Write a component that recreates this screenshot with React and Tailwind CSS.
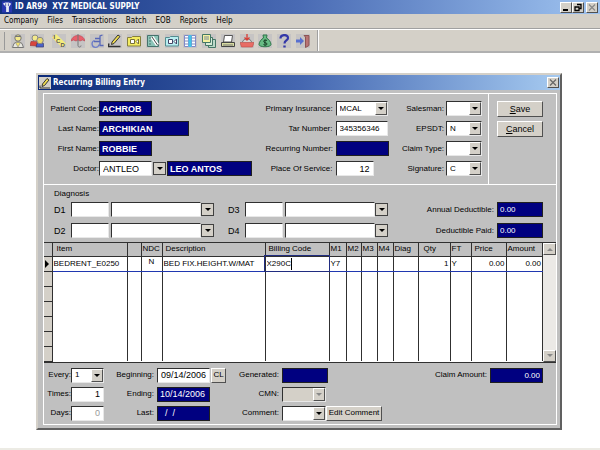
import React from 'react';

const menus = ['Company', 'Files', 'Transactions', 'Batch', 'EOB', 'Reports', 'Help'];

const patientIcons = [
  {
    name: 'Doctor',
    art: (
      <>
        <path d="M1.500 13.500 3 9.500l2.500-1.500h3l2.500 1.500 1.500 4z" fill="#e8e8e0" stroke="#777" />
        <circle cx="7" cy="4" r="3.200" fill="#f3e98c" stroke="#777" />
        <path d="M4.500 8.500 7 13l2.500-4.500z" fill="#f3e36a" stroke="#888" strokeWidth=".6" />
        <path d="M4 2.500h6" stroke="#777" />
      </>
    ),
  },
  {
    name: 'Patients',
    art: (
      <>
        <path d="M0 11.500 1 7.500h6v4.500z" fill="#d8443c" stroke="#933" strokeWidth=".6" />
        <path d="M6 13 7 9.500h6.500v3.500z" fill="#4a62c8" stroke="#336" strokeWidth=".6" />
        <circle cx="5" cy="4" r="3" fill="#f3e98c" stroke="#888" />
        <circle cx="10" cy="6.500" r="3.200" fill="#eadb6c" stroke="#888" />
      </>
    ),
  },
];

const toolIcons = [
  {
    name: 'ICD codes',
    art: (
      <>
        <path d="M0 3.500 4 0l10 9.500-4 4z" fill="#f6ec7c" />
        <g fontSize="6" fontWeight="bold" fill="#555">
          <text x="1.500" y="5">I</text>
          <text x="4" y="9">C</text>
          <text x="8.500" y="13">D</text>
        </g>
      </>
    ),
  },
  {
    name: 'Insurance',
    art: (
      <>
        <path d="M0 7C1 3 4 1.500 7 1.500S13 3 14 7l-2.500-1L9 7 7 6 5 7 2.500 6z" fill="#e8606c" stroke="#b84450" strokeWidth=".6" />
        <path d="M7 0v11.500c0 2 3 2 3 0" fill="none" stroke="#777" />
      </>
    ),
  },
  {
    name: 'Equipment',
    art: (
      <>
        <path d="M4.500 6.500a3.500 3.500 0 1 0 4.500 4" fill="none" stroke="#6c7cc8" strokeWidth="1.300" />
        <path d="M12.500 1 10 2v5.500H4M5 4.500h5M10 7.500v4h3.500" fill="none" stroke="#5868b8" strokeWidth="1.300" />
      </>
    ),
  },
  {
    name: 'Billing entry',
    art: (
      <>
        <path d="M4 8 10 1l2 1.500L6 9.500 3.500 10.500z" fill="#f0dc50" stroke="#333" />
        <path d="M1 9.500 0 12.500h12.500" fill="none" stroke="#333" strokeWidth="1.500" />
      </>
    ),
  },
  {
    name: 'Cards',
    art: (
      <>
        <path d="M.5 3.500h4l1-1h8v9.500H.5z" fill="#f4ec60" stroke="#87803c" />
        <path d="M3.500 5.500h4v4h-4zM11.500 5 9 7.500l2.500 2.500z" fill="#fff" stroke="#776f38" />
      </>
    ),
  },
  {
    name: 'Edit record',
    art: (
      <>
        <path d="M1.500 1.500h11v11h-11z" fill="#8cc4b8" stroke="#47736c" />
        <path d="M3 4h2M3 7h2M3 10h2" stroke="#47736c" />
        <path d="m6 3 5.500 8" stroke="#fff" strokeWidth="3.500" />
        <path d="m6 3 5.500 8" stroke="#444" />
      </>
    ),
  },
  {
    name: 'Payments',
    art: (
      <>
        <path d="M.5 3.500h4l1-1h8v9.500H.5z" fill="#b8eef0" stroke="#548c90" />
        <path d="M3.500 5.500h4v4h-4zM11.500 5 9 7.500l2.500 2.500z" fill="#fff" stroke="#446" />
      </>
    ),
  },
  {
    name: 'Ledger',
    art: (
      <>
        <path d="M1.500 1.500h4v11h-4zM8.500 1.500h4v11h-4z" fill="#fff" stroke="#8088c8" />
        <path d="M5.500 1h3v12h-3z" fill="#42c4e8" />
        <path d="M2 4h3M2 7h3M2 10h3M9 4h3M9 7h3M9 10h3" stroke="#7c88c0" />
      </>
    ),
  },
  {
    name: 'Copies',
    art: (
      <>
        <path d="M6.500 5.500h7v8h-7z" fill="#bcd8c8" stroke="#476" />
        <path d="M3.500 3.500h7v8h-7z" fill="#d8ecd8" stroke="#476" />
        <path d="M.5.5h8v8h-8z" fill="#f4f0a0" stroke="#476" />
        <path d="M2 3h5M2 5h5" stroke="#789" />
      </>
    ),
  },
  {
    name: 'Print',
    art: (
      <>
        <path d="M3.500 1.500h8L10.500 8h-8z" fill="#fff" stroke="#555" />
        <path d="M.5 8.500h13v4H.5z" fill="#d8dca0" stroke="#444" />
        <path d="M2 11h10" stroke="#777" />
      </>
    ),
  },
  {
    name: 'Deposit',
    art: (
      <>
        <path d="M2.500 8C3 4 11 4 11.500 8" fill="#d8d4d0" stroke="#777" />
        <path d="M0 8.500h14L12.500 13h-11z" fill="#e86c64" stroke="#b84c44" strokeWidth=".6" />
        <path d="M7 0v6M4.500 3.500 7 6l2.500-2.500" fill="none" stroke="#d83c34" strokeWidth="1.300" />
      </>
    ),
  },
  {
    name: 'Money',
    art: (
      <>
        <path d="M5 1h4L8.500 4c2 1 4.500 4 4.500 6.500 0 3-12 3-12 0C1 8 3.500 5 5.500 4z" fill="#68bc84" stroke="#2f7548" />
        <path d="M9 6.500C7 5.500 5 6.500 6 8s3 .5 3 2-2.500 1.500-3.500.5M7 5.500v6" fill="none" stroke="#163d24" />
      </>
    ),
  },
  {
    name: 'Help',
    art: (
      <>
        <path d="M3.500 4.500C3.500 0 11 0 11 4c0 2.500-3.500 2.500-3.500 5.500" fill="none" stroke="#3438a8" strokeWidth="2.200" />
        <path d="M6.300 11.500h2.400v2H6.300z" fill="#3438a8" />
      </>
    ),
  },
  {
    name: 'Exit',
    art: (
      <>
        <path d="M8 1.500h5v10L9.500 13.500V3z" fill="#b87474" stroke="#8c5454" />
        <path d="M0 5.500h4V3l4 4-4 4V8.500H0z" fill="#5870d0" />
      </>
    ),
  },
];

const columns = [
  { title: '', width: 'w-[8px]' },
  { title: 'Item', width: 'w-[75px]', head: 'pl-1', value: 'BEDRENT_E0250' },
  { title: '', width: 'w-[14px]' },
  { title: 'NDC', width: 'w-[21px]', value: 'N', cell: 'text-center align-top leading-[10px]' },
  { title: 'Description', width: 'w-[103px]', head: 'pl-[3px]', value: 'BED FIX.HEIGHT.W/MAT' },
  { title: 'Billing Code', width: 'w-[64px]', head: 'pl-[3px]', value: 'X290C', edit: true },
  { title: 'M1', width: 'w-[17px]', value: 'Y7' },
  { title: 'M2', width: 'w-[15px]' },
  { title: 'M3', width: 'w-[16px]' },
  { title: 'M4', width: 'w-[16px]' },
  { title: 'Diag', width: 'w-[25px]' },
  { title: 'Qty', width: 'w-[32px]', head: 'pl-[5px]', value: '1', cell: 'text-right' },
  { title: 'FT', width: 'w-[21px]', value: 'Y' },
  { title: 'Price', width: 'w-[35px]', head: 'pl-[3px]', value: '0.00', cell: 'text-right' },
  { title: 'Amount', width: 'w-auto', value: '0.00', cell: 'text-right' },
];

const sunken = 'border border-t-[#303030] border-l-[#303030] border-r-[#e8e8e8] border-b-[#e8e8e8]';
const raised = 'border border-t-white border-l-white border-r-[#505050] border-b-[#505050] bg-[#d4d0c8]';

const Icon = ({ icon }) => (
  <button type="button" aria-label={icon.name} className="h-[14px] w-[14px] bg-[#c6c4c4]">
    <svg viewBox="0 0 14 14" className="h-[14px] w-[14px]">{icon.art}</svg>
  </button>
);

const Arrow = ({ muted }) => (
  <svg viewBox="0 0 6 3" className="h-[3px] w-[6px]">
    <path d="M0 0h6L3 3z" fill={muted ? '#888' : '#000'} />
  </svg>
);

const Field = ({ id, label, labelWidth, children }) => (
  <div className="flex h-[15px] items-center">
    <label htmlFor={id} className={`${labelWidth} shrink-0 text-right whitespace-nowrap`}>{label}</label>
    {children}
  </div>
);

const TextBox = ({ id, value = '', width, className = '', label }) => (
  <input id={id} aria-label={label} defaultValue={value} className={`${width} ${sunken} h-[15px] bg-white px-[3px] outline-none ${className}`} />
);

const NavyBox = ({ id, value = '', width, className = '', label }) => (
  <input id={id} aria-label={label} readOnly value={value} className={`${width} h-[15px] border border-[#202020] bg-[#000080] px-[2px] text-white outline-none ${className}`} />
);

const Combo = ({ id, value = '', width, disabled = false }) => (
  <div className={`${width} ${sunken} flex h-[15px] ${disabled ? 'bg-[#d4d0c8]' : 'bg-white'}`}>
    <select id={id} disabled={disabled} defaultValue={value} className="min-w-0 flex-1 appearance-none pl-[3px] outline-none">
      <option>{value}</option>
    </select>
    <span className={`${raised} flex w-3 items-center justify-center`}><Arrow muted={disabled} /></span>
  </div>
);

const Diagnosis = ({ name }) => (
  <div className="flex h-[15px] items-center">
    <label htmlFor={name} className="w-[17px] text-[9px]">{name}</label>
    <TextBox id={name} width="w-[38px]" />
    <TextBox label={`${name} description`} width="w-[90px]" className="ml-[2px]" />
    <button type="button" aria-label={`Choose ${name}`} className="flex h-[13px] w-[13px] items-center justify-center border border-[#404040] bg-[#d4d0c8]">
      <Arrow />
    </button>
  </div>
);

const Caption = () => (
  <header className="flex h-[14px] items-center bg-linear-to-r from-[#123180] via-[#4a6bb4] to-[#a0c4f0] pr-[2px] pl-[2px] text-white">
    <svg viewBox="0 0 12 12" className="h-3 w-[11px]">
      <path d="M0 0h11v12H0z" fill="#2838b0" />
      <path d="M1 2.500C3 .5 8 .5 10 2.500L7.500 6v5.500h-3V6z" fill="#e8ecf4" />
      <path d="M4 2v3M7 2v3" stroke="#5060a8" />
    </svg>
    <h1 className="flex-1 pl-[2px] text-[8px] font-bold whitespace-pre font-['DejaVu_Sans_Condensed',sans-serif]">ID AR99  XYZ MEDICAL SUPPLY</h1>
    <button type="button" aria-label="Minimize" className={`${raised} h-[11px] w-3`}>
      <svg viewBox="0 0 10 9"><path d="M2 7h5" stroke="#000" strokeWidth="2" /></svg>
    </button>
    <button type="button" aria-label="Restore" className={`${raised} h-[11px] w-3`}>
      <svg viewBox="0 0 10 9">
        <path d="M4 1.500h4v4H6M2 4h4v3.500H2z" fill="none" stroke="#000" strokeWidth="1.300" />
      </svg>
    </button>
    <button type="button" aria-label="Close" className={`${raised} ml-[2px] h-[11px] w-3`}>
      <svg viewBox="0 0 10 9"><path d="m2 1.500 6 6m0-6-6 6" stroke="#888" strokeWidth="1.200" /></svg>
    </button>
  </header>
);

const ItemsGrid = () => (
  <div className="flex border-t border-[#303030]">
    <table className="min-w-0 flex-1 table-fixed border-collapse bg-white">
      <thead>
        <tr className="h-[13px] bg-[#c0c0c0]">
          {columns.map((col, i) => (
            <th key={i} className={`${col.width} ${col.head || 'pl-px'} overflow-hidden border-r border-b border-[#303030] p-0 text-left font-normal leading-[10px] whitespace-nowrap`}>
              {col.title}
            </th>
          ))}
        </tr>
      </thead>
      <tbody>
        <tr className="h-[15px]">
          {columns.map((col, i) => (
            <td
              key={i}
              className={`border-r border-b p-0 px-px whitespace-nowrap ${i === 0 ? 'border-[#303030] bg-[#d4d0c8]' : 'border-r-[#303030] border-b-[#2038b0]'} ${col.edit ? 'outline outline-[#202c80]' : ''} ${col.cell || ''}`}
            >
              {i === 0 && <svg viewBox="0 0 4 8" className="h-2 w-1"><path d="M0 0v8l4-4z" /></svg>}
              {col.edit ? (
                <span className="flex items-center">
                  <input aria-label={col.title} defaultValue={col.value} size="1" className="w-[25px] border-r border-black outline-none" />
                </span>
              ) : col.value}
            </td>
          ))}
        </tr>
        {[1, 2, 3, 4, 5, 6].map((row) => (
          <tr key={row} className="h-[15px]">
            {columns.map((col, i) => (
              <td key={i} className={`border-r border-[#303030] p-0 ${i === 0 ? 'border-b bg-[#d4d0c8]' : ''}`}></td>
            ))}
          </tr>
        ))}
      </tbody>
    </table>
    <div className="flex w-[13px] flex-col justify-between bg-[#ebe9e6]">
      <button type="button" aria-label="Scroll up" className={`${raised} flex h-3 items-center justify-center`}>
        <span className="rotate-180"><Arrow muted /></span>
      </button>
      <button type="button" aria-label="Scroll down" className={`${raised} flex h-3 items-center justify-center`}><Arrow muted /></button>
    </div>
  </div>
);

const BillingWindow = () => (
  <section className="mt-5 mr-[38px] ml-9 border-2 border-t-[#d4d0c8] border-l-[#d4d0c8] border-r-[#606060] border-b-[#606060] bg-[#c0c0c0]">
    <div className="flex h-[15px] items-center bg-linear-to-r from-[#0c2a78] via-[#4466b0] to-[#a6caf0] pr-px pl-px text-white">
      <svg viewBox="0 0 12 12" className="h-3 w-3">
        <path d="M0 0h12v12H0z" fill="#d4d0c8" />
        <path d="M3.500 7 8 1.500l2 1.500-4.500 5.500L3 9.500z" fill="#f0dc50" stroke="#333" />
        <path d="M1 8.500v2.500h10" fill="none" stroke="#333" />
      </svg>
      <h2 className="flex-1 pl-[2px] text-[8px] font-bold font-['DejaVu_Sans_Condensed',sans-serif]">Recurring Billing Entry</h2>
      <button type="button" aria-label="Close window" className={`${raised} h-[11px] w-3`}>
        <svg viewBox="0 0 10 9"><path d="m2 1.500 6 6m0-6-6 6" stroke="#666" strokeWidth="1.200" /></svg>
      </button>
    </div>

    <div className="mt-[3px] mr-[3px] mb-[3px] ml-[5px] border border-white">
      {/* Patient, insurance and claim flags */}
      <div className="flex border-b border-white">
        <div className="flex min-w-0 flex-1 justify-between pt-[7px] pr-[6px] pb-2">
          <div className="flex flex-col gap-[5px]">
            <Field id="code" label="Patient Code:" labelWidth="w-[55px]"><NavyBox id="code" value="ACHROB" width="w-[53px]" className="text-[9px] font-bold" /></Field>
            <Field id="last" label="Last Name:" labelWidth="w-[55px]"><NavyBox id="last" value="ARCHIKIAN" width="w-[90px]" className="text-[9px] font-bold" /></Field>
            <Field id="first" label="First Name:" labelWidth="w-[55px]"><NavyBox id="first" value="ROBBIE" width="w-[53px]" className="text-[9px] font-bold" /></Field>
            <Field id="doctor" label="Doctor:" labelWidth="w-[55px]">
              <TextBox id="doctor" value="ANTLEO" width="w-[53px]" className="text-[9px]" />
              <button type="button" aria-label="Choose doctor" className="mx-px flex h-[13px] w-[13px] items-center justify-center border border-[#404040] bg-[#d4d0c8]"><Arrow /></button>
              <NavyBox label="Doctor name" value="LEO ANTOS" width="w-[85px]" className="text-[9px] font-bold" />
            </Field>
          </div>
          <div className="flex flex-col gap-[5px]">
            <Field id="insurance" label="Primary Insurance:" labelWidth="w-[70px] pr-[3px]"><Combo id="insurance" value="MCAL" width="w-[52px]" /></Field>
            <Field id="tar" label="Tar Number:" labelWidth="w-[70px] pr-[3px]"><TextBox id="tar" value="345356346" width="w-[52px]" /></Field>
            <Field id="recurring" label="Recurring Number:" labelWidth="w-[70px] pr-[3px]"><NavyBox id="recurring" width="w-[53px]" /></Field>
            <Field id="place" label="Place Of Service:" labelWidth="w-[70px] pr-[3px]"><TextBox id="place" value="12" width="w-[38px]" className="text-right text-[9px]" /></Field>
          </div>
          <div className="flex flex-col gap-[5px]">
            <Field id="salesman" label="Salesman:" labelWidth="w-[44px] pr-[2px]"><Combo id="salesman" width="w-9" /></Field>
            <Field id="epsdt" label="EPSDT:" labelWidth="w-[44px] pr-[2px]"><Combo id="epsdt" value="N" width="w-9" /></Field>
            <Field id="claimType" label="Claim Type:" labelWidth="w-[44px] pr-[2px]"><Combo id="claimType" width="w-9" /></Field>
            <Field id="signature" label="Signature:" labelWidth="w-[44px] pr-[2px]"><Combo id="signature" value="C" width="w-9" /></Field>
          </div>
        </div>
        <div className="flex w-[68px] flex-col gap-1 border-l border-white pt-[7px] pl-2">
          <button type="button" className={`${raised} h-4 w-[46px] text-[9px] leading-[13px]`}><u>S</u>ave</button>
          <button type="button" className={`${raised} h-4 w-[46px] text-[9px] leading-[13px]`}><u>C</u>ancel</button>
        </div>
      </div>

      <div className="flex items-end justify-between pt-1 pr-[13px] pb-1 pl-[10px]">
        <div>
          <h3 className="leading-[10px]">Diagnosis</h3>
          <div className="mt-[3px] flex gap-[14px]">
            <div className="flex flex-col gap-[6px]">
              <Diagnosis name="D1" />
              <Diagnosis name="D2" />
            </div>
            <div className="flex flex-col gap-[6px]">
              <Diagnosis name="D3" />
              <Diagnosis name="D4" />
            </div>
          </div>
        </div>
        <div className="flex flex-col gap-[6px]">
          <Field id="annual" label="Annual Deductible:" labelWidth="w-[72px] pr-[3px]"><NavyBox id="annual" value="0.00" width="w-[46px]" /></Field>
          <Field id="paid" label="Deductible Paid:" labelWidth="w-[72px] pr-[3px]"><NavyBox id="paid" value="0.00" width="w-[46px]" /></Field>
        </div>
      </div>

      <ItemsGrid />

      {/* Schedule and totals */}
      <div className="flex justify-between border-t border-[#303030] pt-[5px] pr-[13px] pb-[3px]">
        <div className="flex gap-[9px]">
          <div className="flex flex-col gap-1">
            <Field id="every" label="Every:" labelWidth="w-[27px]"><Combo id="every" value="1" width="w-[33px]" /></Field>
            <Field id="times" label="Times:" labelWidth="w-[27px]"><TextBox id="times" value="1" width="w-[33px]" className="text-right text-[9px]" /></Field>
            <Field id="days" label="Days:" labelWidth="w-[27px]"><TextBox id="days" value="0" width="w-[33px]" className="text-right text-[9px] text-[#999]" /></Field>
          </div>
          <div className="flex flex-col gap-1">
            <Field id="beginning" label="Beginning:" labelWidth="w-[44px] pr-[3px]">
              <TextBox id="beginning" value="09/14/2006" width="w-[53px]" className="text-[9px]" />
              <button type="button" className={`${raised} ml-px h-[15px] w-[15px] leading-3`}>CL</button>
            </Field>
            <Field id="ending" label="Ending:" labelWidth="w-[44px] pr-[3px]"><NavyBox id="ending" value="10/14/2006" width="w-[53px]" className="text-[9px]" /></Field>
            <Field id="lastDate" label="Last:" labelWidth="w-[44px] pr-[3px]"><NavyBox id="lastDate" value="  /  /" width="w-[53px]" className="text-[9px]" /></Field>
          </div>
          <div className="flex flex-col gap-1">
            <Field id="generated" label="Generated:" labelWidth="w-[47px] pr-[3px]"><NavyBox id="generated" width="w-[46px]" /></Field>
            <Field id="cmn" label="CMN:" labelWidth="w-[47px] pr-[3px]"><Combo id="cmn" width="w-[44px]" disabled /></Field>
            <Field id="comment" label="Comment:" labelWidth="w-[47px] pr-[3px]">
              <Combo id="comment" width="w-[44px]" />
              <button type="button" className={`${raised} h-[15px] w-14 leading-3 whitespace-nowrap`}>Edit Comment</button>
            </Field>
          </div>
        </div>
        <Field id="amount" label="Claim Amount:" labelWidth="w-[56px] pr-[3px]"><NavyBox id="amount" value="0.00" width="w-[53px]" className="text-right" /></Field>
      </div>
    </div>
  </section>
);

export default function App() {
  return (
    <div className="flex min-h-screen flex-col bg-white font-['Liberation_Sans',sans-serif] text-[8px] leading-[12px] text-black">
      <Caption />
      <nav className="flex h-[15px] items-center gap-[9px] border-b border-[#a0a0a0] bg-[#d4d0c8] pl-1 text-[8px] font-['DejaVu_Sans_Condensed',sans-serif]">
        {menus.map((item) => (
          <a key={item} href="#">{item}</a>
        ))}
      </nav>
      <div className="flex h-6 items-center border-t border-b-2 border-t-white border-b-[#b0b0b0] bg-[#d4d0c8] pl-1">
        <span className="h-[18px] w-px bg-[#999]"></span>
        <div className="ml-[6px] flex gap-[5px]">
          {patientIcons.map((icon) => <Icon key={icon.name} icon={icon} />)}
        </div>
        <div className="ml-2 flex w-[258px] justify-between">
          {toolIcons.map((icon) => <Icon key={icon.name} icon={icon} />)}
        </div>
        <span className="ml-[7px] h-full w-[2px] border-l border-[#a0a0a0] bg-white"></span>
      </div>
      <main className="flex-1">
        <BillingWindow />
      </main>
      <footer className="h-[2px] bg-[#ecebe4]"></footer>
    </div>
  );
}
